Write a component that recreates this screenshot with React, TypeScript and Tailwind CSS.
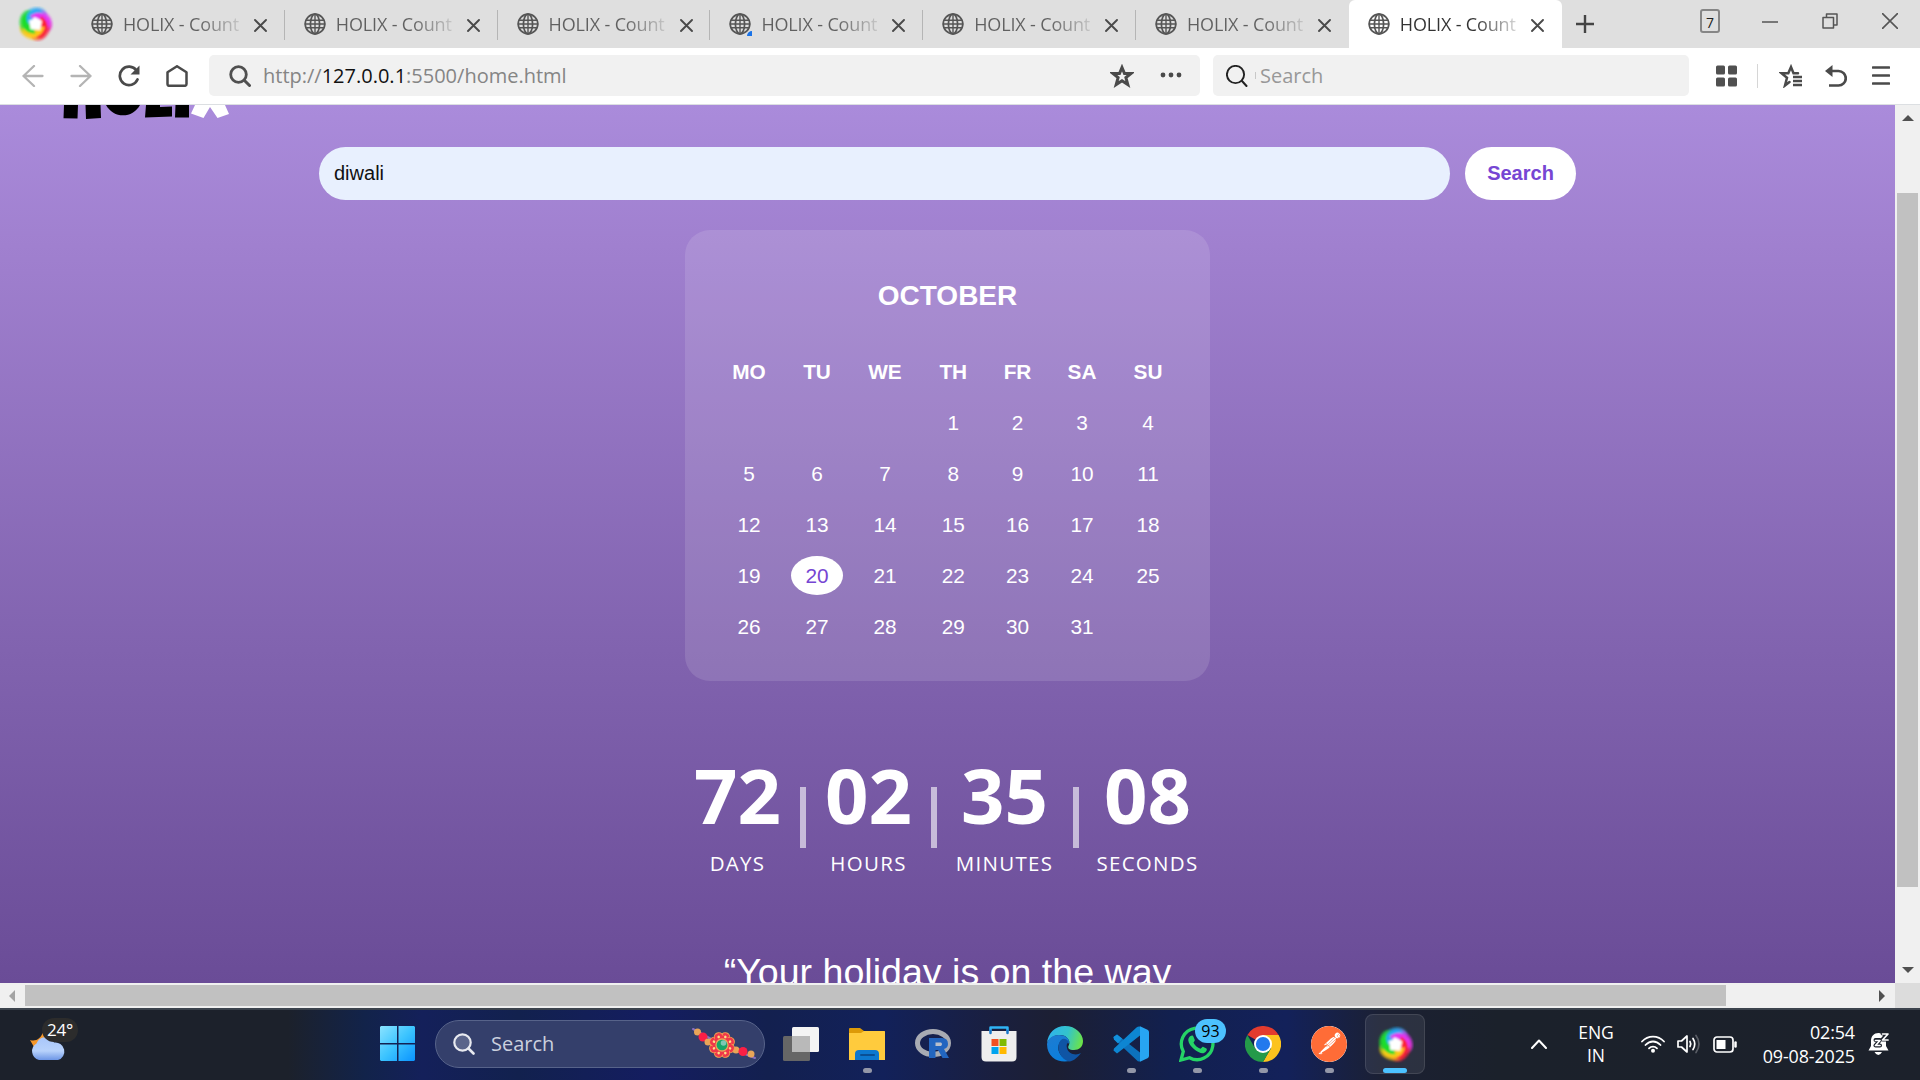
import React from "react";
import { SiPostman } from "react-icons/si";

const UI = "font-['Open_Sans','Noto_Sans',sans-serif]";
const ARIAL = "font-['Liberation_Sans',Arial,sans-serif]";

type SvgProps = { className?: string; children?: React.ReactNode; box?: string };
const Svg = ({ className = "", children, box = "0 0 24 24" }: SvgProps) => (
  <svg viewBox={box} className={`block shrink-0 ${className}`} fill="none" strokeLinecap="round" strokeLinejoin="round">
    {children}
  </svg>
);

const petals = ["#22aaf5", "#e336f2", "#fb2038", "#ffc814", "#1fdc2c"];

function Swirl({ className }: { className: string }) {
  return (
    <Svg className={className} box="-18 -18 36 36">
      <defs>
        <filter id="soft" x="-20%" y="-20%" width="140%" height="140%">
          <feGaussianBlur stdDeviation="0.8" />
        </filter>
      </defs>
      <g filter="url(#soft)">
        {petals.map((c, i) => (
          <path
            key={c}
            transform={`rotate(${i * 72})`}
            d="M-13.500 -3C-14 -11 -5 -18 4 -16.500C9 -15.500 12 -12 11.500 -8C6 -12 0 -10 -2 -6Z"
            fill={c}
            opacity="0.65"
          />
        ))}
        {petals.map((c, i) => (
          <path
            key={c}
            transform={`rotate(${i * 72})`}
            d="M-9 3C-12.500 -5 -8.500 -12.500 0 -14.500C4 -15 7 -13 8 -11C2 -11.500 -3 -8 -3 -2Z"
            fill={c}
          />
        ))}
        <path d="M-1 -7L2 -5.500L6.500 -3L5.500 1.500L4.500 6L0 5.500L-5 5.500L-5.500 1L-6.500 -3.500L-3 -4.500Z" fill="#fff" />
      </g>
    </Svg>
  );
}

const Globe = () => (
  <Svg className="h-[22px] w-[22px] stroke-[#555]" box="0 0 22 22">
    <g strokeWidth="1.7">
      <circle cx="11" cy="11" r="9.8" />
      <ellipse cx="11" cy="11" rx="4.6" ry="9.8" />
      <path d="M2.3 7.2H19.7M2.3 14.8H19.7M11 1.2V20.8M1.2 11H20.8" strokeWidth="1.4" />
    </g>
  </Svg>
);

function Tab({ active, first, loading }: { active?: boolean; first?: boolean; loading?: boolean }) {
  return (
    <div className={`relative flex h-12 w-[212.8px] items-center pl-[19px] ${active ? "rounded-t-md bg-white" : ""}`}>
      {!active && !first && <i className="absolute left-[-1px] top-[10px] h-[30px] w-px bg-[#b5b5b5]" />}
      <Globe />
      {loading && <i className="absolute left-[37px] top-[31px] h-[5px] w-[5px] rounded-tl-full bg-[#1a73e8]" />}
      <span
        className={`ml-[10px] w-[122px] overflow-hidden whitespace-nowrap bg-clip-text text-[18px] leading-6 text-transparent tracking-[-0.15px] ${
          active
            ? "bg-[linear-gradient(90deg,#333_62%,#33333320_98%)]"
            : "bg-[linear-gradient(90deg,#606060_62%,#60606020_98%)]"
        }`}
      >
        HOLIX - Count
      </span>
      <Svg className="ml-[9px] mt-[3px] h-[13px] w-[13px] stroke-[#4a4a4a]" box="0 0 13 13">
        <path d="M1 1L12 12M12 1L1 12" strokeWidth="1.9" />
      </Svg>
    </div>
  );
}

function TabBar() {
  return (
    <div className="flex h-12 bg-[#dfdfdf]">
      <div className="flex w-[72px] items-center pl-[17px]">
        <Swirl className="h-[36px] w-[37px]" />
      </div>
      <Tab first />
      <Tab />
      <Tab />
      <Tab loading />
      <Tab />
      <Tab />
      <Tab active />
      <Svg className="ml-[13px] mt-[14px] h-5 w-5 stroke-[#444]" box="0 0 20 20">
        <path d="M10 1V19M1 10H19" strokeWidth="2.4" strokeLinecap="butt" />
      </Svg>
      <div className="ml-auto flex pr-[22px] pt-[9px]">
        <div className="h-6 w-5 rounded-[3px] border-2 border-[#868686] pt-[3px] text-center text-[14px] font-medium leading-[18px] text-[#222]">
          7
        </div>
        <Svg className="ml-[42px] mt-1 h-4 w-4 stroke-[#555]" box="0 0 16 16">
          <path d="M0 9H16" strokeWidth="1.6" />
        </Svg>
        <Svg className="ml-[44px] mt-1 h-4 w-4 stroke-[#555]" box="0 0 16 16">
          <path d="M1 4.5H11.5V15H1ZM4.5 4.500V1H15V12H11.500" strokeWidth="1.5" />
        </Svg>
        <Svg className="ml-[44px] mt-1 h-4 w-4 stroke-[#555]" box="0 0 16 16">
          <path d="M0.500 0.500L15.500 15.500M15.500 0.500L0.500 15.500" strokeWidth="1.6" />
        </Svg>
      </div>
    </div>
  );
}

function Toolbar() {
  return (
    <div className="flex h-[57px] items-start border-b border-[#dcdfe2] bg-white pt-[7px]">
      <div className="flex h-[41px] w-[209px] items-center pl-[22px]">
        <Svg className="h-[22px] w-[22px] stroke-[#b4b4b4]" box="0 0 22 22">
          <path d="M20.500 11H1.500M12 1L1.500 11L12 21" strokeWidth="2.300" />
        </Svg>
        <Svg className="ml-[26px] h-[22px] w-[22px] stroke-[#b4b4b4]" box="0 0 22 22">
          <path d="M1.500 11H20.500M10 1L20.500 11L10 21" strokeWidth="2.300" />
        </Svg>
        <Svg className="ml-[26px] h-[22px] w-[22px] stroke-[#4a4a4a]" box="0 0 22 22">
          <path d="M18.500 5.500A9.200 9.200 0 1 0 19.500 14.500" strokeWidth="2.700" />
          <path d="M21.500 0.500V9.500H12.500Z" fill="#4a4a4a" stroke="none" />
        </Svg>
        <Svg className="ml-[26px] h-[22px] w-[22px] stroke-[#4a4a4a]" box="0 0 22 22">
          <path d="M1.500 7.200L11 1.200L20.500 7.200V19Q20.500 20.800 18.700 20.800H3.300Q1.500 20.800 1.500 19Z" strokeWidth="2.500" />
        </Svg>
      </div>
      <div className="flex h-[41px] w-[991px] items-center rounded-[5px] bg-[#f1f1f1] pl-5">
        <Svg className="h-[22px] w-[22px] stroke-[#505050]" box="0 0 22 22">
          <circle cx="9.500" cy="9.500" r="7.800" strokeWidth="2.800" />
          <path d="M15.500 15.500L20.500 20.500" strokeWidth="3" />
        </Svg>
        <span className="ml-[12px] whitespace-nowrap text-[20px] leading-7 text-[#858585]">
          http://<b className="font-normal text-[#111]">127.0.0.1</b>:5500/home.html
        </span>
        <Svg className="ml-auto h-6 w-6 stroke-[#4a4a4a]">
          <path d="M12 3.500L14.500 9.500H21L15.900 13.600L17.800 20.500L12 16.700L6.200 20.500L8.100 13.600L3 9.500H9.500Z" strokeWidth="3" strokeLinejoin="miter" />
        </Svg>
        <Svg className="ml-[26px] mr-[18px] mt-[-2px] h-[6px] w-[22px] fill-[#4a4a4a]" box="0 0 22 6">
          <circle cx="3" cy="3" r="2.400" />
          <circle cx="11" cy="3" r="2.400" />
          <circle cx="19" cy="3" r="2.400" />
        </Svg>
      </div>
      <div className="ml-[13px] flex h-[41px] w-[476px] items-center rounded-[5px] bg-[#f1f1f1] pl-[13px]">
        <Svg className="h-[22px] w-[22px] stroke-[#222]" box="0 0 22 22">
          <circle cx="9.500" cy="9.500" r="8.600" strokeWidth="1.900" />
          <path d="M16 16L20.500 21" strokeWidth="2" />
        </Svg>
        <i className="ml-[7px] h-[7px] w-px bg-[#c8c8c8]" />
        <span className="ml-[4px] text-[20px] leading-7 text-[#989898]">Search</span>
      </div>
      <div className="ml-[27px] flex h-[41px] items-center">
        <Svg className="h-[22px] w-[22px] fill-[#505050]" box="0 0 22 22">
          <rect x="0" y="0.500" width="9" height="9" rx="1.500" />
          <rect x="12" y="0.500" width="9" height="9" rx="1.500" />
          <rect x="0" y="12.500" width="9" height="9" rx="1.500" />
          <rect x="12" y="12.500" width="9" height="9" rx="1.500" />
        </Svg>
        <i className="ml-[19px] h-6 w-px bg-[#d6d6d6]" />
        <Svg className="ml-[21px] h-6 w-6 stroke-[#4a4a4a]">
          <path d="M19 9.200H14.500L12 3L9.300 9.200H2.500L8 13.700L6 21.500L10.500 18" strokeWidth="2.500" strokeLinejoin="miter" />
          <path d="M14 13H23M14 17H23M14 21H23" strokeWidth="2.300" strokeLinecap="butt" />
        </Svg>
        <Svg className="ml-[22px] h-[22px] w-[22px] stroke-[#4a4a4a]" box="0 0 22 22">
          <path d="M3 6H13.500A7 7 0 0 1 13.500 20.500H4" strokeWidth="2.700" strokeLinecap="butt" />
          <path d="M0 6L7.500 0V12Z" fill="#4a4a4a" stroke="none" />
        </Svg>
        <Svg className="ml-[25px] h-[20px] w-[18px] stroke-[#4a4a4a]" box="0 0 18 20">
          <path d="M1 1.500H17M1 9.500H17M1 17.500H17" strokeWidth="2.600" />
        </Svg>
      </div>
    </div>
  );
}

const weekdays = ["MO", "TU", "WE", "TH", "FR", "SA", "SU"];
const days: (number | null)[] = [null, null, null, ...Array.from({ length: 31 }, (_, i) => i + 1)];

function Calendar() {
  return (
    <div className="mt-[30px] h-[451px] w-[525px] shrink-0 rounded-[25px] bg-white/12 pl-[34px] pt-[45px]">
      <h2 className="w-[457px] text-center text-[28px] font-bold leading-[42px]">OCTOBER</h2>
      <div className="mt-[35px] grid grid-cols-[60px_52px_60px_52.5px_52px_53px_55px] gap-3 text-center text-[20.8px] leading-[39px]">
        {weekdays.map((d) => (
          <b key={d}>{d}</b>
        ))}
        {days.map((d, i) => (
          <span key={i} className={d === 20 ? "rounded-[50%] bg-white text-[#7646d3]" : ""}>
            {d}
          </span>
        ))}
      </div>
    </div>
  );
}

const Unit = ({ value, label, className }: { value: string; label: string; className: string }) => (
  <div className={`flex shrink-0 flex-col items-center ${className}`}>
    <span className="text-[76px] font-bold leading-[76px]">{value}</span>
    <span className="mt-[16px] whitespace-nowrap text-[20.500px] leading-7 tracking-[1.300px]">{label}</span>
  </div>
);
const Bar = () => <i className="mt-[30px] h-[61px] w-[6px] shrink-0 bg-white/60" />;

function Page() {
  return (
    <div className={`relative flex h-[878px] w-[1895px] flex-col items-center overflow-hidden bg-[linear-gradient(180deg,#aa8bdb_0%,#a080cf_16%,#8163af_62%,#6a4c97_100%)] text-white ${ARIAL}`}>
      <Svg className="absolute left-[62px] top-0 h-[16px] w-[170px]" box="0 0 170 16">
        <g fill="#000">
          <path d="M2 0H16L15.500 13.500L1.500 13.200ZM23.500 0H38.500L39 13L24 14Z" />
          <path d="M44 0H78C74 7 68 10.300 61 10.300S48 7 44 0Z" />
          <path d="M84 0H98V2L110 1.500V11.500L83 12.500ZM113.500 0H127V12.500H113Z" />
        </g>
        <path d="M133 0H163L167 9L155.500 13L148 2L141.500 13L129 8.500Z" fill="#fff" />
      </Svg>
      <div className="mt-[42px] flex w-[1257px] shrink-0 text-[20px]">
        <div className="flex h-[53px] w-[1131px] items-center rounded-full bg-[#e8f0fe] pb-[2px] pl-[15px] text-[#111]">diwali</div>
        <div className="ml-[15px] flex h-[53px] w-[111px] items-center justify-center rounded-full bg-white pb-[2px] font-bold text-[#7646d3]">
          Search
        </div>
      </div>
      <Calendar />
      <div className={`mt-[76px] flex w-[512px] shrink-0 items-start ${UI}`}>
        <Unit value="72" label="DAYS" className="w-[92px] mr-[16px]" />
        <Bar />
        <Unit value="02" label="HOURS" className="w-[94px] ml-[16px] mr-[15px]" />
        <Bar />
        <Unit value="35" label="MINUTES" className="w-[96px] ml-[20px] mr-[20px]" />
        <Bar />
        <Unit value="08" label="SECONDS" className="w-[102px] ml-[18px]" />
      </div>
      <p className="mt-[73px] shrink-0 whitespace-nowrap text-[37.600px] leading-[44px]">“Your holiday is on the way</p>
    </div>
  );
}

const Tri = ({ d, dim }: { d: string; dim?: boolean }) => (
  <Svg className={`h-3 w-3 ${dim ? "fill-[#a3a3a3]" : "fill-[#505050]"}`} box="0 0 12 12">
    <path d={d} />
  </Svg>
);

function DockItem({ children, running, active }: { children: React.ReactNode; running?: boolean; active?: boolean }) {
  return (
    <div className={`relative mx-[3px] flex h-[60px] w-[60px] items-center justify-center rounded-lg ${active ? "border border-white/10 bg-white/8" : ""}`}>
      {children}
      {running && <i className="absolute bottom-[1px] h-[5px] w-[9px] rounded-full bg-[#9397a8]" />}
      {active && <i className="absolute bottom-0 h-[5px] w-6 rounded-full bg-[#4cc2ff]" />}
    </div>
  );
}

const Rakhi = () => (
  <Svg className="h-[34px] w-[64px]" box="0 0 64 34">
    <path d="M1 2L30 18L63 31" stroke="#8a6fc0" strokeWidth="2" />
    <circle cx="5.500" cy="5" r="3.500" fill="#e8a558" />
    <circle cx="11" cy="10" r="4.500" fill="#fb1f45" />
    <circle cx="16" cy="15" r="3.500" fill="#e8a558" />
    <circle cx="44" cy="23" r="3.500" fill="#e8a558" />
    <circle cx="51" cy="24.500" r="4.500" fill="#fb1f45" />
    <circle cx="59" cy="27" r="3.500" fill="#e8a558" />
    {Array.from({ length: 8 }, (_, i) => (
      <g key={i} transform={`rotate(${i * 45 + 22.5} 30 18)`}>
        <circle cx="30" cy="9.500" r="4.500" fill="#f0374a" stroke="#f2a34f" strokeWidth="1" />
      </g>
    ))}
    <circle cx="30" cy="18" r="9.500" fill="#f0374a" />
    {Array.from({ length: 8 }, (_, i) => (
      <circle key={i} transform={`rotate(${i * 45 + 22.5} 30 18)`} cx="30" cy="9.300" r="1.300" fill="#ffdf86" />
    ))}
    <circle cx="30" cy="18" r="6" fill="#17a567" stroke="#e8a558" strokeWidth="1.300" />
    <circle cx="31.500" cy="16" r="2.800" fill="#7bc8b4" />
  </Svg>
);

function Taskbar() {
  return (
    <div className={`flex h-[72px] items-center border-t-2 border-[#3c434d] bg-[linear-gradient(90deg,#1c212b_0%,#1c212b_15%,#12234a_19%,#14205a_22%,#12214e_27%,#141d60_34%,#13204f_40%,#12215a_46%,#1a1f3e_52%,#1c1f33_55%,#12204f_61%,#13215a_67%,#1b2033_72%,#1b212b_78%,#1c212b_100%)] pb-[2px] text-white ${UI}`}>
      <div className="relative ml-[30px] h-[60px] w-[50px]">
        <Svg className="mt-[19px] h-[28px] w-[36px]" box="0 0 36 28">
          <defs>
            <linearGradient id="cl" x1="0" y1="0" x2="0" y2="1">
              <stop stopColor="#a8c6fa" />
              <stop offset="0.600" stopColor="#b8d2fb" />
              <stop offset="1" stopColor="#6d96e6" />
            </linearGradient>
          </defs>
          <path d="M0 7C6 9 11 5 12.500 0C16 4 16 10 12 13L4 14Z" fill="#f6982a" />
          <path d="M9 27A9 9 0 0 1 6.500 10.500A9.500 9.500 0 0 1 24 9.500A9 9 0 0 1 28 27Z" fill="url(#cl)" />
        </Svg>
        <span className="absolute left-[12px] top-[4px] h-6 w-9 rounded-full bg-[#2c2c2c] text-center text-[17px] leading-[24px] tracking-[-0.200px]">24°</span>
      </div>
      <Svg className="ml-[300px] h-9 w-9" box="0 0 36 36">
        <defs>
          <linearGradient id="win" x1="0" y1="0" x2="1" y2="1">
            <stop stopColor="#8be3ff" />
            <stop offset="0.500" stopColor="#3cc4ff" />
            <stop offset="1" stopColor="#0a93ff" />
          </linearGradient>
        </defs>
        <path d="M1 0H17V17H0V1ZM18.500 0H34L35 1V17H18.500ZM0 18.500H17V35H1L0 34ZM18.500 18.500H35V34L34 35H18.500Z" fill="url(#win)" />
      </Svg>
      <div className="ml-[19px] flex h-12 w-[330px] items-center rounded-full border border-[#57638a] bg-[#343f6b] pl-[17px]">
        <Svg className="h-[22px] w-[22px] stroke-[#e8eaf0]" box="0 0 22 22">
          <circle cx="9.500" cy="9.500" r="8.200" strokeWidth="2.200" fill="#5a648a" />
          <path d="M15.500 15.500L20.500 20.500" strokeWidth="2.600" />
        </Svg>
        <span className="ml-[16px] text-[20px] leading-7 text-[#cbd0de]">Search</span>
        <span className="ml-auto mr-2">
          <Rakhi />
        </span>
      </div>
      <div className="ml-[3px] flex">
        <DockItem>
          <Svg className="h-9 w-9" box="0 0 36 36">
            <rect x="0" y="10" width="27" height="25" rx="1.500" fill="#666" />
            <rect x="9" y="1" width="27" height="25" rx="1.500" fill="#f4f4f4" />
            <rect x="9" y="10" width="18" height="16" fill="#b9b9b9" />
          </Svg>
        </DockItem>
        <DockItem running>
          <Svg className="h-9 w-9" box="0 0 36 36">
            <path d="M0 3Q0 2 1 2H11L15 5H35Q36 5 36 6V12H0Z" fill="#dd9a08" />
            <path d="M0 7H12L15 5H35Q36 5 36 6V34H0Z" fill="#ffcb3d" />
            <path d="M6 34V28Q6 24 10 24H26Q30 24 30 28V34Z" fill="#0d78cf" />
            <path d="M12 29H25" stroke="#0a4f94" strokeWidth="2" />
          </Svg>
        </DockItem>
        <DockItem>
          <Svg className="h-9 w-9" box="0 0 36 36">
            <ellipse cx="18" cy="17" rx="15.500" ry="11.500" stroke="#a8abb3" strokeWidth="5" />
            <path d="M14 12H27Q33 12 33 18Q33 22 29 23L34 32H27.500L23 24H20.500V32H14Z" fill="#2265c0" />
            <path d="M20.500 16.500H26Q28 18 26 20H20.500Z" fill="#b9bfcb" />
          </Svg>
        </DockItem>
        <DockItem>
          <Svg className="h-9 w-9" box="0 0 36 36">
            <path d="M9.500 6V1.500H26.500V6" stroke="#2fb4f5" strokeWidth="2.500" />
            <path d="M0.500 5H35.500V31Q35.500 35.500 31 35.500H5Q0.500 35.500 0.500 31Z" fill="#eee" />
            <path d="M9.500 5V7M26.500 5V7" stroke="#1676c8" strokeWidth="2.500" />
            <path d="M10.500 13H17.500V20H10.500Z" fill="#f25022" />
            <path d="M18.500 13H25.500V20H18.500Z" fill="#7fba00" />
            <path d="M10.500 21H17.500V28H10.500Z" fill="#00a4ef" />
            <path d="M18.500 21H25.500V28H18.500Z" fill="#ffb900" />
          </Svg>
        </DockItem>
        <DockItem>
          <Svg className="h-9 w-9" box="0 0 36 36">
            <defs>
              <linearGradient id="e1" x1="0" y1="0.300" x2="1" y2="0.500">
                <stop stopColor="#2fb3ee" />
                <stop offset="0.550" stopColor="#33c3cb" />
                <stop offset="1" stopColor="#6be34a" />
              </linearGradient>
              <linearGradient id="e2" x1="0" y1="0" x2="0.500" y2="1">
                <stop stopColor="#1f7bd0" />
                <stop offset="1" stopColor="#0a7fdc" />
              </linearGradient>
            </defs>
            <path d="M0 17C1 7 8 0 18 0C29 0 36 8 36 15C36 21 32 24 27 24C22 24 20 22 22 19C24 14 19 9 13 9C7 9 2 12 0 17Z" fill="url(#e1)" />
            <path d="M0 18C1 12 6 9 12 9C19 9 23 13 22 18C20 13 14 13 12 18C9 25 15 34 24 34.500C14 38 0 33 0 18Z" fill="url(#e2)" />
            <path d="M14 14C9 19 11 32 22 35.500C27 35 31 31 34 27C29 30 21 28 20 22C19 19 20 17 22 16C19 12 16 12 14 14Z" fill="#0f55a5" />
          </Svg>
        </DockItem>
        <DockItem running>
          <Svg className="h-9 w-9" box="0 0 36 36">
            <path d="M0.500 11L4 8.500L27 26.500V35.500Q25 36 23.500 34L1 13Z" fill="#0c72bd" />
            <path d="M0.500 24.500L4 27.500L27 9.500V0.500Q25 0 23.500 1.500L1 22.500Z" fill="#0d86d2" />
            <path d="M0.500 11L4 8.500L9 12.500L5 17.500L1 13.500Z" fill="#1290dc" />
            <path d="M27 0.300L34.500 3.800Q36 4.600 36 6V30Q36 31.400 34.500 32.200L27 35.700Z" fill="#27a5f2" />
          </Svg>
        </DockItem>
        <DockItem running>
          <Svg className="h-9 w-9" box="0 0 36 36">
            <path d="M2 34L4.300 25.500A15.800 15.800 0 1 1 10.500 31.700Z" stroke="#25d366" strokeWidth="3.300" strokeLinejoin="miter" />
            <path d="M11.500 10C13 9 14 9.500 14.500 10.800L15.800 14C16 15 14.500 16.300 14.500 16.800C16 19.800 18.500 21.800 21.500 22.800C22.300 22.500 23.300 20.500 24 20.800L27.500 22.500C28.500 23.500 27.300 26 25 27C20.500 28.500 10 21 9.300 14.500C9.200 12.500 10 11 11.500 10Z" fill="#25d366" />
          </Svg>
          <span className="absolute left-[28px] top-[5px] h-6 w-[31px] rounded-full bg-[#4cc2ff] text-center text-[16px] leading-6 text-black">93</span>
        </DockItem>
        <DockItem running>
          <Svg className="h-9 w-9" box="0 0 36 36">
            <path d="M18 18L2.400 9A18 18 0 0 1 33.600 9Z" fill="#e33b2e" />
            <path d="M18 9H33.600A18 18 0 0 1 18 36L25.800 22.500Z" fill="#fcc31e" />
            <path d="M2.400 9A18 18 0 0 0 18 36L25.800 22.500L10.200 22.500Z" fill="#249a49" />
            <circle cx="18" cy="18" r="9" fill="#fff" />
            <circle cx="18" cy="18" r="7.100" fill="#2279ed" />
          </Svg>
        </DockItem>
        <DockItem running>
          <SiPostman className="h-9 w-9 rounded-full bg-white text-[#ff6c37]" />
        </DockItem>
        <DockItem active>
          <Swirl className="h-[37px] w-[37px]" />
        </DockItem>
      </div>
      <Svg className="ml-[103px] h-[10px] w-4 stroke-white" box="0 0 16 10">
        <path d="M1 9L8 1.500L15 9" strokeWidth="2" />
      </Svg>
      <div className="ml-[24px] w-[50px] text-center text-[17.500px] leading-[23px]">
        ENG
        <br />
        IN
      </div>
      <Svg className="ml-[20px] h-[18px] w-[24px] stroke-white" box="0 0 24 18">
        <path d="M1 6.500C7 0 17 0 23 6.500M4.500 10C9 5.300 15 5.300 19.500 10M8 13.300C10.200 11 13.800 11 16 13.300" strokeWidth="1.800" />
        <circle cx="12" cy="15.800" r="2" fill="#fff" stroke="none" />
      </Svg>
      <Svg className="ml-[12px] h-5 w-6 stroke-white" box="0 0 24 20">
        <path d="M1 7H4.500L10 2V18L4.500 13H1Z M13 7.500Q14.500 10 13 12.500M16 4.500Q19.500 10 16 15.500" strokeWidth="1.700" />
        <path d="M19 1.500Q25 10 19 18.500" strokeWidth="1.700" stroke="#5a5e66" />
      </Svg>
      <Svg className="ml-[12px] h-[17px] w-6 stroke-white" box="0 0 24 17">
        <rect x="1" y="1" width="19" height="15" rx="3" strokeWidth="1.700" />
        <rect x="3.500" y="4" width="9" height="9" fill="#fff" stroke="none" />
        <path d="M22.500 6.500V10.500" strokeWidth="2.500" />
      </Svg>
      <div className="ml-auto whitespace-nowrap text-right text-[17.900px] leading-[24px] tracking-[-0.100px]">
        02:54
        <br />
        09-08-2025
      </div>
      <Svg className="ml-[13px] mr-[30px] h-6 w-[22px]" box="0 0 22 24">
        <path d="M3 9C3 4 6 1 10.500 1S18 4 18 9V14L20.500 18.500H0.500L3 14ZM6.500 20H14Q12.500 23 10.300 23T6.500 20Z" fill="#fff" />
        <path d="M7.500 8H12L7.500 13.500H12M14.500 1.500H19.500L14.500 7.500H19.500" stroke="#1c212b" strokeWidth="4" />
        <path d="M7.500 8.500H12L7.500 13.500H12M14.500 2H20L14.500 8H20" stroke="#fff" strokeWidth="1.700" />
      </Svg>
    </div>
  );
}

export default function App() {
  return (
    <div className={`flex h-[1080px] w-[1920px] flex-col overflow-hidden ${UI}`}>
      <TabBar />
      <Toolbar />
      <div className="flex h-[878px]">
        <Page />
        <div className="flex w-[25px] flex-col items-center bg-[#f0f0f0] pb-[7px] pt-[7px]">
          <Tri d="M0 9H12L6 3Z" />
          <i className="mt-[69px] h-[694px] w-[21px] bg-[#c1c1c1]" />
          <span className="mt-auto">
            <Tri d="M0 3H12L6 9Z" />
          </span>
        </div>
      </div>
      <div className="flex h-[25px]">
        <div className="flex w-[1895px] items-center bg-[#f0f0f0] pl-[6px] pr-[7px]">
          <Tri d="M9 0V12L3 6Z" dim />
          <i className="ml-[7px] h-[21px] w-[1701px] bg-[#c1c1c1]" />
          <span className="ml-auto">
            <Tri d="M3 0V12L9 6Z" />
          </span>
        </div>
        <div className="flex-1 bg-[#dcdcdc]" />
      </div>
      <Taskbar />
    </div>
  );
}
